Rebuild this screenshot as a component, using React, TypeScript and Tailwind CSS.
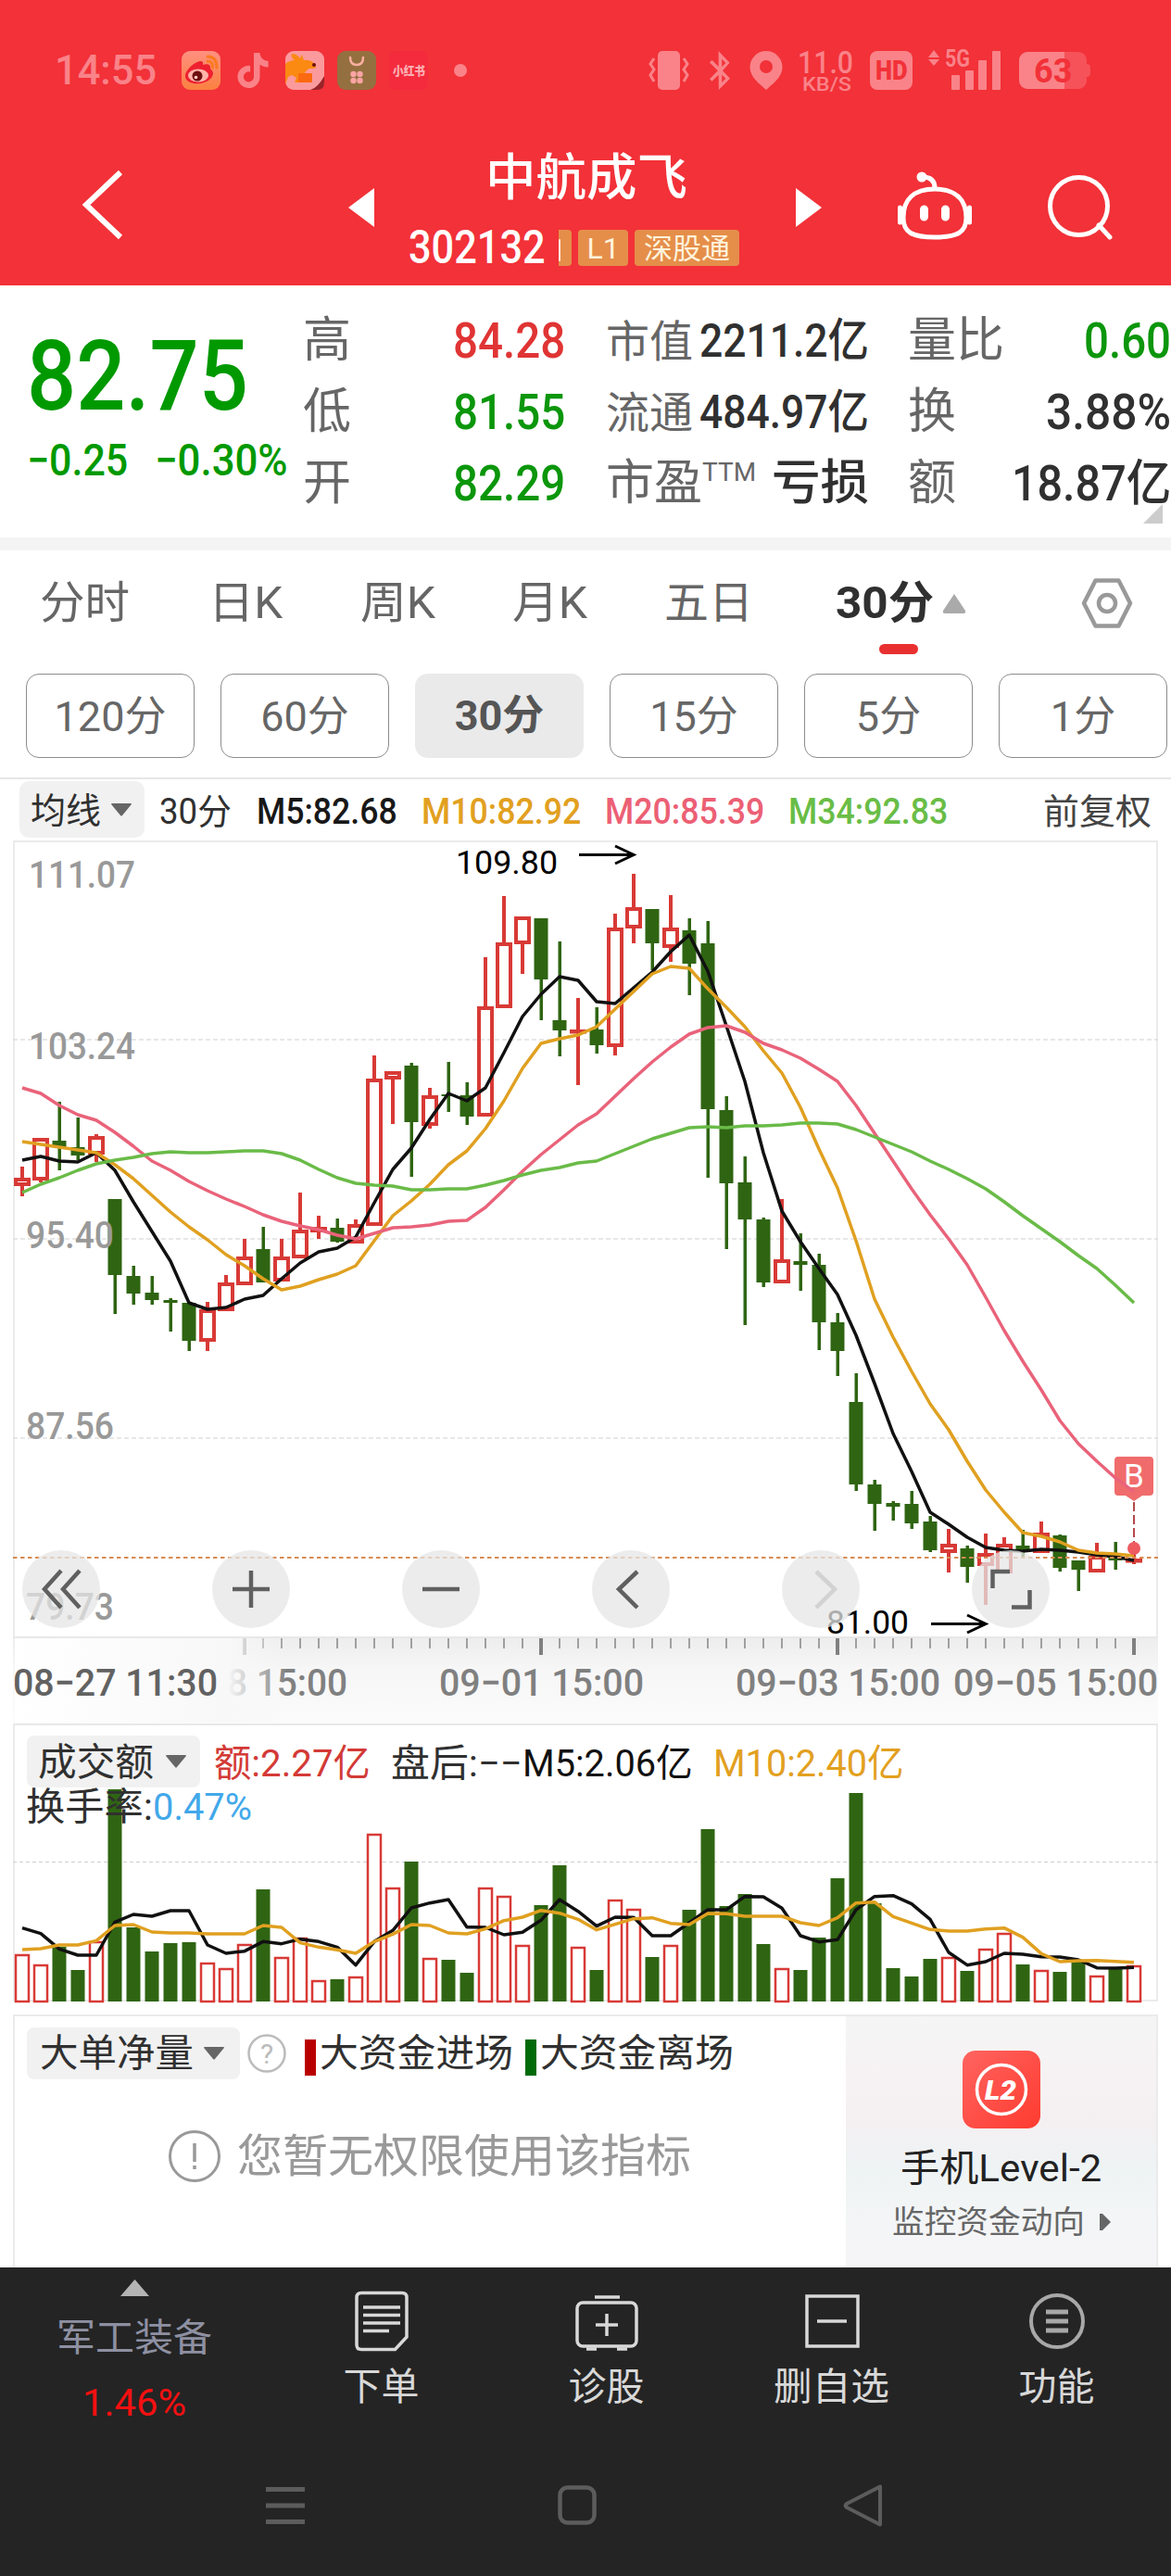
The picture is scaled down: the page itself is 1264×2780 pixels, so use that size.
import { useLayoutEffect, useRef, useState } from "react";
import type { ReactNode } from "react";
import { FaBluetoothB, FaTiktok } from "react-icons/fa";

const RED = "#d83a36";
const GREEN = "#2f6512";

// up/down flag of each 30 minute bar
const DIRS = "rrggrgggggrrrgrrrgrrrgrggrrrggrgrrgrggggg" + "rgggggggg" + "rgrrgrggrgr";

// [high, bodyTop, bodyBottom, low]
const CANDLES = [
  [1259, 1271, 1280, 1291], [1228, 1228, 1274, 1276], [1189, 1231, 1238, 1263], [1206, 1238, 1247, 1252],
  [1224, 1226, 1246, 1254], [1294, 1294, 1376, 1418], [1366, 1377, 1396, 1408], [1377, 1395, 1403, 1408],
  [1401, 1403, 1406, 1437], [1406, 1406, 1447, 1458], [1405, 1413, 1448, 1458], [1376, 1384, 1415, 1415],
  [1337, 1356, 1387, 1387], [1324, 1348, 1384, 1384], [1337, 1356, 1383, 1383], [1287, 1327, 1358, 1358],
  [1312, 1324, 1330, 1337], [1315, 1325, 1340, 1341], [1316, 1321, 1342, 1342], [1139, 1164, 1323, 1323],
  [1156, 1156, 1165, 1213], [1147, 1150, 1211, 1270], [1174, 1182, 1215, 1218], [1146, 1181, 1183, 1200],
  [1168, 1182, 1205, 1214], [1033, 1086, 1205, 1205], [967, 1017, 1088, 1088], [989, 989, 1019, 1051],
  [991, 991, 1057, 1101], [1016, 1101, 1112, 1140], [1077, 1111, 1115, 1171], [1087, 1111, 1128, 1137],
  [986, 1001, 1130, 1139], [943, 979, 1002, 1018], [981, 981, 1018, 1047], [966, 1001, 1023, 1038],
  [991, 1004, 1040, 1074], [994, 1018, 1197, 1271], [1183, 1198, 1277, 1348], [1248, 1276, 1316, 1430],
  [1314, 1316, 1384, 1389], [1294, 1359, 1385, 1385], [1331, 1361, 1365, 1393], [1353, 1365, 1427, 1457],
  [1417, 1427, 1458, 1485], [1482, 1513, 1602, 1609], [1597, 1602, 1623, 1652], [1620, 1622, 1626, 1641],
  [1609, 1623, 1644, 1650], [1636, 1642, 1673, 1675], [1650, 1666, 1676, 1697], [1668, 1671, 1691, 1708],
  [1655, 1676, 1690, 1732], [1659, 1666, 1698, 1698], [1651, 1668, 1675, 1680], [1642, 1654, 1676, 1676],
  [1656, 1657, 1692, 1696], [1684, 1684, 1694, 1717], [1665, 1679, 1697, 1697], [1664, 1680, 1684, 1694],
  [1672, 1682, 1686, 1688],
];

const M5 = [
  1252, 1248, 1253, 1254, 1244, 1263, 1297, 1329, 1361, 1406, 1413, 1411, 1402, 1398, 1380, 1363, 1351, 1347, 1335, 1298,
  1262, 1239, 1208, 1180, 1188, 1174, 1136, 1097, 1073, 1054, 1058, 1081, 1083, 1066, 1049, 1027, 1009, 1048, 1107, 1167,
  1244, 1307, 1340, 1369, 1397, 1441, 1493, 1547, 1588, 1632, 1645, 1659, 1670, 1673, 1674, 1672, 1673, 1675, 1678, 1680, 1684,
];
const M10 = [
  1232, 1235, 1238, 1241, 1244, 1257, 1272, 1290, 1308, 1324, 1338, 1354, 1366, 1380, 1392, 1388, 1381, 1375, 1366, 1339,
  1312, 1296, 1278, 1257, 1242, 1218, 1188, 1153, 1126, 1121, 1117, 1108, 1089, 1070, 1051, 1043, 1045, 1067, 1087, 1108,
  1134, 1158, 1195, 1240, 1282, 1339, 1402, 1443, 1480, 1515, 1543, 1577, 1608, 1632, 1654, 1658, 1664, 1673, 1676, 1677, 1679,
];
const M20 = [
  1174, 1180, 1193, 1203, 1209, 1222, 1237, 1253, 1263, 1275, 1285, 1294, 1302, 1311, 1318, 1323, 1327, 1333, 1337, 1331,
  1325, 1324, 1322, 1318, 1317, 1303, 1284, 1264, 1246, 1230, 1214, 1202, 1183, 1164, 1146, 1130, 1116, 1109, 1107, 1114,
  1126, 1133, 1142, 1154, 1167, 1193, 1223, 1253, 1283, 1311, 1337, 1365, 1400, 1436, 1469, 1500, 1533, 1558, 1577, 1595, 1610,
];
const M34 = [
  1287, 1278, 1271, 1263, 1256, 1252, 1249, 1245, 1243, 1244, 1244, 1243, 1242, 1242, 1245, 1252, 1262, 1271, 1277, 1279,
  1280, 1284, 1284, 1283, 1283, 1279, 1274, 1268, 1263, 1260, 1255, 1253, 1245, 1237, 1229, 1223, 1217, 1216, 1217, 1215,
  1215, 1214, 1212, 1212, 1213, 1219, 1227, 1235, 1243, 1253, 1262, 1272, 1283, 1297, 1312, 1326, 1340, 1355, 1369, 1387, 1406,
];

const VOL = [
  2109, 2120, 2101, 2126, 2095, 1931, 2080, 2106, 2097, 2096, 2118, 2124, 2098, 2039, 2112, 2091, 2137, 2136, 2133, 1979,
  2037, 2009, 2113, 2115, 2129, 2037, 2046, 2099, 2056, 2013, 2101, 2126, 2050, 2060, 2112, 2099, 2061, 1974, 2057, 2044,
  2098, 2124, 2126, 2091, 2027, 1935, 2054, 2124, 2133, 2114, 2112, 2127, 2103, 2086, 2120, 2126, 2128, 2116, 2132, 2124, 2121,
];
// volume averages, in thirds of a pixel from the panel top
const V5 = [
  662, 680, 730, 750, 750, 643, 618, 624, 606, 606, 717, 744, 737, 706, 713, 698, 706, 724, 782, 706,
  670, 597, 581, 570, 659, 660, 684, 676, 637, 570, 608, 656, 627, 628, 687, 687, 645, 603, 603, 560,
  561, 598, 687, 707, 700, 603, 560, 557, 584, 634, 741, 782, 771, 744, 747, 755, 756, 765, 791, 792, 790,
];
const V10 = [
  732, 729, 717, 717, 703, 654, 651, 675, 678, 678, 681, 681, 681, 654, 660, 710, 724, 733, 744, 706,
  682, 651, 654, 678, 681, 665, 638, 627, 605, 614, 634, 668, 650, 632, 629, 647, 651, 615, 616, 624,
  624, 624, 645, 654, 629, 581, 578, 625, 646, 667, 672, 672, 665, 662, 692, 745, 771, 768, 767, 770, 773,
];

const barX = (i: number) => 24 + i * 20;
const toPoints = (ys: number[]) => ys.map((y, i) => `${barX(i)},${y}`).join(" ");
const volY = (v: number) => 1860 + v / 3;

// Squeezes its text to the width of the box
function Fit({ className, children }: { className: string; children: ReactNode }) {
  const box = useRef<HTMLSpanElement>(null);
  const text = useRef<HTMLSpanElement>(null);
  const [scale, setScale] = useState(1);

  useLayoutEffect(() => {
    if (!box.current || !text.current) return;
    setScale(box.current.offsetWidth / text.current.offsetWidth);
  }, [children]);

  return (
    <span ref={box} className={`inline-block shrink-0 whitespace-nowrap ${className}`}>
      <span ref={text} className="inline-block origin-left" style={{ transform: `scaleX(${scale})` }}>
        {children}
      </span>
    </span>
  );
}

function Down() {
  return (
    <svg width="22" height="14" viewBox="0 0 22 14" className="shrink-0">
      <path d="M1 0h20q1.500 0 .5 1.500L12 13q-1 1-2 0L.5 1.500Q-.5 0 1 0z" fill="#666" />
    </svg>
  );
}

function StatusBar() {
  return (
    <div className="flex h-[44px] items-center text-[#f98389]">
      <Fit className="ml-[59px] w-[110px] text-[45px] leading-[44px] font-medium">14:55</Fit>
      <svg className="ml-[27px]" width="42" height="42" viewBox="0 0 42 42">
        <defs>
          <linearGradient id="wb" x1="0" y1="0" x2="0" y2="1">
            <stop offset="0" stopColor="#ff9080" />
            <stop offset="1" stopColor="#fb8140" />
          </linearGradient>
        </defs>
        <rect width="42" height="42" rx="9" fill="url(#wb)" />
        <path d="M17 12c-7 3-14 11-13 16 1 6 9 8 16 7 8-1 14-6 14-11 0-2-2-4-3-5 1-4-3-6-8-4 1-4-2-5-6-3z" fill="#ee2030" />
        <ellipse cx="18" cy="26.500" rx="11" ry="7" fill="#ffb4aa" />
        <circle cx="17" cy="27" r="5.500" fill="#6d1010" />
        <circle cx="15.500" cy="28.500" r="1.800" fill="#ffd0c8" />
        <path d="M28 6q10 0 10 12M28 11q6 0 5.500 7" fill="none" stroke="#fb7a20" strokeWidth="3" strokeLinecap="round" />
      </svg>
      <FaTiktok className="ml-[17px] h-[38px] w-[36px]" />
      <svg className="ml-[17px]" width="42" height="42" viewBox="0 0 42 42">
        <rect width="42" height="42" rx="9" fill="#fb9a9d" />
        <path d="M0 14c3-3 7-4 10-4-3-2-4-5-3-7 4 0 7 2 9 5l2-4 2 6c6-1 13 3 13 7 0 2-3 2-7 2-4 2-5 5-7 7l-4 3v5h-5l2-5-5-3-4 2-3 8-3 1z" fill="#fb8a12" />
        <circle cx="31" cy="15" r="2" fill="#6d1010" />
        <rect x="14" y="24" width="15" height="10" rx="1" fill="#fb6a10" />
        <path d="M42 27v7q0 8-8 8h-7q8-2 15-15z" fill="#982428" />
      </svg>
      <svg className="ml-[14px]" width="42" height="42" viewBox="0 0 42 42">
        <rect width="42" height="42" rx="9" fill="#947040" />
        <path d="M14 7q0 8 7 8t7-8" fill="none" stroke="#fbb0a0" strokeWidth="2.500" strokeLinecap="round" />
        <g fill="#fba4a4">
          <circle cx="17.500" cy="25" r="3.200" />
          <circle cx="24.500" cy="25" r="3.200" />
          <circle cx="17.500" cy="32" r="3.200" />
          <circle cx="24.500" cy="32" r="3.200" />
        </g>
      </svg>
      <div className="ml-[14px] flex h-[42px] w-[42px] items-center justify-center rounded-lg bg-[#f42b3d]">
        <Fit className="w-[35px] text-[13px] leading-none font-black text-[#fbb0b4]">小红书</Fit>
      </div>
      <div className="ml-[28px] h-3.5 w-3.5 rounded-full bg-[#f98389]" />

      <svg className="ml-[195px]" width="46" height="42" viewBox="0 0 46 42" fill="#f98389">
        <rect x="11" width="24" height="42" rx="5" />
        <path d="M7 8L3 14l4 6-4 6 4 7M39 8l4 6-4 6 4 6-4 7" fill="none" stroke="#f98389" strokeWidth="3" />
      </svg>
      <FaBluetoothB className="ml-[16px] h-[42px] w-[32px]" />
      <svg className="ml-[16px]" width="36" height="42" viewBox="0 0 36 42">
        <path d="M18 0A17.500 17.500 0 0 0 .5 17.500C.5 29 12 36 18 42c6-6 17.500-13 17.500-24.500A17.500 17.500 0 0 0 18 0zm0 10a7 7 0 1 1 0 14 7 7 0 0 1 0-14z" fill="#f98389" fillRule="evenodd" />
      </svg>
      <svg className="ml-[16px]" width="60" height="56" viewBox="860 48 60 56" fill="#f98389" fontWeight="500">
        <text x="860" y="79" fontSize="33" textLength="60" lengthAdjust="spacingAndGlyphs">11.0</text>
        <text x="865" y="98" fontSize="21" textLength="53" lengthAdjust="spacingAndGlyphs">KB/S</text>
      </svg>
      <div className="ml-[18px] flex h-[42px] w-[46px] items-center justify-center rounded-lg bg-[#f98389]">
        <Fit className="w-[35px] text-[30px] leading-none font-black text-[#f23138]">HD</Fit>
      </div>
      <svg className="ml-[17px]" width="79" height="60" viewBox="1001 45 79 60" fill="#f98389">
        <path d="M1001 61l6-8 6 8zM1001 63h12l-6 7z" />
        <text x="1019" y="71" fontSize="25" fontWeight="700" textLength="27" lengthAdjust="spacingAndGlyphs">5G</text>
        <rect x="1026" y="80" width="9" height="16" rx="1" />
        <rect x="1041" y="75" width="9" height="21" rx="1" />
        <rect x="1055" y="64" width="9" height="32" rx="1" />
        <rect x="1070" y="54" width="9" height="42" rx="1" />
      </svg>
      <div className="ml-[19px] flex items-center">
        <div className="flex h-[40px] w-[73px] items-center justify-center rounded-[9px] bg-[linear-gradient(90deg,#f98389_67%,#f6525a_67%)]">
          <Fit className="w-[41px] text-[37px] leading-none font-bold text-[#f23138]">63</Fit>
        </div>
        <div className="h-[14px] w-1 rounded-r bg-[#f6525a]" />
      </div>
    </div>
  );
}

function Header() {
  return (
    <header className="h-[308px] bg-[#f23138] pt-[54px]">
      <StatusBar />
      <div className="flex h-[210px] items-start text-white">
        <svg className="mt-[83px] ml-[87px] shrink-0" width="48" height="80" viewBox="87 181 48 80">
          <path d="M130 186L93 221l37 35" fill="none" stroke="#fff" strokeWidth="6" />
        </svg>
        <svg className="mt-[105px] ml-[241px] shrink-0" width="28" height="42" viewBox="0 0 28 42">
          <path d="M0 21L28 0v42z" fill="#fff" />
        </svg>
        <div className="ml-[37px] w-[357px] pt-[65px]">
          <Fit className="ml-[83px] w-[218px] text-[54px] leading-[60px] font-medium">中航成飞</Fit>
          <div className="mt-[25px] flex h-[39px] items-center">
            <Fit className="w-[148px] text-[50px] leading-[39px] font-medium">302132</Fit>
            <div className="ml-[14px] h-[39px] w-[14px] rounded-r bg-[#e58e4a]">
              <div className="h-6 w-[2px] translate-y-2.5 rounded bg-[#fff3dc]" />
            </div>
            <div className="ml-[7px] h-[39px] w-[54px] rounded bg-[#e58e4a] text-center text-[32px] leading-[40px] text-[#fff3dc]">L1</div>
            <div className="ml-[7px] h-[39px] w-[113px] rounded bg-[#e58e4a] text-center text-[31px] leading-[41px] text-[#fff3dc]">深股通</div>
          </div>
        </div>
        <svg className="mt-[105px] ml-[61px] shrink-0" width="28" height="42" viewBox="0 0 28 42">
          <path d="M28 21L0 0v42z" fill="#fff" />
        </svg>
        <svg className="mt-[85px] ml-[79px] shrink-0" width="87" height="78" viewBox="966 183 87 78" fill="none" stroke="#fff" strokeWidth="5">
          <path d="M1009 204c23 0 34 12 34 31 0 16-10 21-34 21s-34-5-34-21c0-19 11-31 34-31z" />
          <path d="M1009 203c0-8-4-12-13-12" />
          <circle cx="995" cy="191" r="3" fill="#fff" />
          <path d="M971.500 224v16M1046.500 224v16" strokeLinecap="round" />
          <path d="M997.500 226v8M1020.500 226v8" strokeWidth="9" strokeLinecap="round" />
        </svg>
        <svg className="mt-[88px] ml-[76px] shrink-0" width="76" height="76" viewBox="1129 186 76 76" fill="none" stroke="#fff" strokeWidth="5">
          <circle cx="1164.500" cy="222.500" r="31" />
          <path d="M1186 243l12 13" strokeLinecap="round" />
        </svg>
      </div>
    </header>
  );
}

function Cell({ children }: { children: ReactNode }) {
  return <div className="flex h-[77px] items-center justify-between pt-[3px]">{children}</div>;
}

function Quote() {
  return (
    <section className="relative flex h-[272px] pt-[20px] font-medium text-[#303030]">
      <div className="ml-[29px] w-[298px] text-[#009900]">
        <Fit className="mt-[22px] w-[239px] text-[105px] leading-[114px]">82.75</Fit>
        <div className="mt-[8px] flex text-[48px] leading-[50px]">
          <Fit className="w-[109px]">−0.25</Fit>
          <Fit className="ml-[29px] w-[144px]">−0.30%</Fit>
        </div>
      </div>
      <div className="w-[283px] text-[53px] leading-none text-[#0b960b]">
        <Cell><span className="text-[52px] font-normal text-[#666]">高</span><Fit className="w-[121px] text-[#e03434]">84.28</Fit></Cell>
        <Cell><span className="text-[52px] font-normal text-[#666]">低</span><Fit className="w-[121px]">81.55</Fit></Cell>
        <Cell><span className="text-[52px] font-normal text-[#666]">开</span><Fit className="w-[121px]">82.29</Fit></Cell>
      </div>
      <div className="ml-[44px] w-[284px] text-[50px] leading-none">
        <Cell><span className="text-[47px] font-normal text-[#666]">市值</span><Fit className="w-[183px]">2211.2亿</Fit></Cell>
        <Cell><span className="text-[47px] font-normal text-[#666]">流通</span><Fit className="w-[183px]">484.97亿</Fit></Cell>
        <Cell>
          <span className="flex text-[52px] font-normal text-[#666]">市盈<span className="text-[28px] leading-none">TTM</span></span>
          <Fit className="w-[105px] text-[52px]">亏损</Fit>
        </Cell>
      </div>
      <div className="ml-[42px] w-[284px] text-[53px] leading-none">
        <Cell><span className="text-[52px] font-normal text-[#666]">量比</span><Fit className="w-[94px] text-[#0b960b]">0.60</Fit></Cell>
        <Cell><span className="text-[52px] font-normal text-[#666]">换</span><Fit className="w-[135px]">3.88%</Fit></Cell>
        <Cell><span className="text-[52px] font-normal text-[#666]">额</span><Fit className="w-[172px]">18.87亿</Fit></Cell>
      </div>
      <svg className="absolute right-[9px] bottom-[15px]" width="21" height="21" viewBox="0 0 21 21">
        <path d="M21 0v21H0z" fill="#ccc" />
      </svg>
    </section>
  );
}

function Tabs() {
  return (
    <section className="h-[245px] pt-[27px] text-[#666]">
      <nav className="flex h-[60px] items-center text-[48px] leading-[64px]">
        <Fit className="ml-[43px] w-[97px]">分时</Fit>
        <Fit className="ml-[85px] w-[80px]">日K</Fit>
        <Fit className="ml-[84px] w-[81px]">周K</Fit>
        <Fit className="ml-[83px] w-[81px]">月K</Fit>
        <Fit className="ml-[83px] w-[96px]">五日</Fit>
        <div className="relative ml-[89px] flex items-center">
          <Fit className="w-[106px] font-bold text-[#303030]">30分</Fit>
          <svg className="ml-[9px]" width="26" height="21" viewBox="0 0 26 21">
            <path d="M13 0l12 18q1 3-2 3H3q-3 0-2-3z" fill="#aaa" />
          </svg>
          <span className="absolute top-[76px] left-[47px] h-[11px] w-[42px] rounded-full bg-[#e93030]" />
        </div>
        <svg className="ml-[123px] shrink-0" width="58" height="56" viewBox="0 0 58 56" fill="none" stroke="#999" strokeWidth="4.500">
          <path d="M16.500 3.500h25L54 28 41.500 52.500h-25L4 28z" strokeLinejoin="round" />
          <circle cx="29" cy="28" r="9" />
        </svg>
      </nav>
      <div className="mt-[46px] flex gap-[28px] pl-[28px] text-[45px]">
        {["120分", "60分", "30分", "15分", "5分", "1分"].map((label) => (
          <div
            key={label}
            className={`h-[91px] w-[182px] shrink-0 rounded-[14px] text-center leading-[92px] ${
              label === "30分" ? "bg-[#eaeaea] font-bold text-[#555]" : "border border-[#8c8c8c]"
            }`}
          >
            {label}
          </div>
        ))}
      </div>
    </section>
  );
}

function MaLegend() {
  return (
    <div className="flex h-[67px] items-start border-t-2 border-[#e6e6e6] text-[38px] leading-[61px]">
      <div className="mt-[2px] ml-[21px] flex h-[61px] w-[135px] items-center justify-between rounded-[10px] bg-[#f1f1f1] pr-[14px] pl-[12px] text-[#303030]">
        <span className="pt-[3px]">均线</span> <Down />
      </div>
      <div className="mt-[5px] ml-[16px] flex">
        <Fit className="w-[78px] text-[#303030]">30分</Fit>
        <Fit className="ml-[27px] w-[152px] font-medium text-[#181818]">M5:82.68</Fit>
        <Fit className="ml-[26px] w-[172px] font-medium text-[#e2a01f]">M10:82.92</Fit>
        <Fit className="ml-[26px] w-[172px] font-medium text-[#ec6074]">M20:85.39</Fit>
        <Fit className="ml-[26px] w-[172px] font-medium text-[#69bd46]">M34:92.83</Fit>
        <Fit className="ml-[103px] w-[117px] text-[#444]">前复权</Fit>
      </div>
    </div>
  );
}

const PRICE_LABELS = [
  { text: "111.07", x: 31, y: 958, w: 115 },
  { text: "103.24", x: 31, y: 1143, w: 115 },
  { text: "95.40", x: 28, y: 1347, w: 95 },
  { text: "87.56", x: 28, y: 1553, w: 95 },
  { text: "79.73", x: 28, y: 1748, w: 95 },
];

function KLine() {
  return (
    <svg className="block font-[Roboto,sans-serif]" width="1264" height="954" viewBox="0 906 1264 954">
      <defs>
        <linearGradient id="axisBg" x1="0" y1="0" x2="0" y2="1">
          <stop offset="0" stopColor="#ededed" />
          <stop offset=".4" stopColor="#f7f7f7" />
          <stop offset="1" stopColor="#fbfbfb" />
        </linearGradient>
        <linearGradient id="axisFade" x1="0" y1="0" x2="1" y2="0">
          <stop offset="0" stopColor="#fff" />
          <stop offset=".78" stopColor="#f8f8f8" />
          <stop offset="1" stopColor="#f8f8f8" stopOpacity="0" />
        </linearGradient>
      </defs>
      <path d="M15 1860V908H1249V1860" fill="none" stroke="#ebebeb" strokeWidth="2" />
      <path d="M14 1122H1250M14 1337H1250M14 1552H1250" stroke="#dfdfdf" strokeWidth="1.500" strokeDasharray="5 3" />

      {CANDLES.map(([high, top, bottom, low], i) => {
        const x = barX(i);
        return DIRS[i] === "r" ? (
          <g key={i} stroke={RED} strokeWidth="4" fill="none">
            <path d={`M${x} ${high}V${top + 1}M${x} ${bottom - 1}V${low}`} />
            <rect x={x - 7} y={top + 2} width="14" height={Math.max(bottom - top - 4, 0.5)} />
          </g>
        ) : (
          <g key={i} fill={GREEN}>
            <rect x={x - 1.5} y={high} width="3.500" height={low - high} />
            <rect x={x - 7.5} y={top} width="15" height={bottom - top} />
          </g>
        );
      })}

      <g fill="none" strokeWidth="3.500" strokeLinejoin="round">
        <polyline points={toPoints(M5)} stroke="#111" />
        <polyline points={toPoints(M10)} stroke="#e0a020" />
      </g>

      <path d="M14 1681H1250" stroke="#d88b52" strokeWidth="2" strokeDasharray="4.500 3.500" />

      <path d="M1207 1572h34q4 0 4 4v34q0 4-4 4h-8l-9 6-9-6h-8q-4 0-4-4v-34q0-4 4-4z" fill="#f06c6c" />
      <text x="1224" y="1605" fontSize="35" fill="#fff" textAnchor="middle">B</text>
      <path d="M1224 1621V1672" stroke="#b5484c" strokeWidth="2" strokeDasharray="10 4" />
      <circle cx="1224" cy="1671" r="7" fill="#ee5a60" />

      <g fill="none" strokeWidth="3.500" strokeLinejoin="round">
        <polyline points={toPoints(M20)} stroke="#e9637a" />
        <polyline points={toPoints(M34)} stroke="#6abb48" />
      </g>

      {PRICE_LABELS.map((l) => (
        <text key={l.text} x={l.x} y={l.y} fontSize="41" fontWeight="500" fill="#999" textLength={l.w} lengthAdjust="spacingAndGlyphs">
          {l.text}
        </text>
      ))}
      <text x="492" y="943" fontSize="35" textLength="110" lengthAdjust="spacingAndGlyphs">109.80</text>
      <path d="M625 922.500H683M664 913l20 9.500-20 9.500" fill="none" stroke="#000" strokeWidth="3" />
      <text x="892" y="1763" fontSize="35" textLength="89" lengthAdjust="spacingAndGlyphs">81.00</text>
      <path d="M1005 1752.500H1063M1044 1743l20 9.500-20 9.500" fill="none" stroke="#000" strokeWidth="3" />

      {/* time axis */}
      <rect x="14" y="1767" width="1236" height="93" fill="url(#axisBg)" />
      <path d="M14 1767H1250" stroke="#e8e8e8" strokeWidth="2" />
      {Array.from({ length: 50 }, (_, i) => {
        const major = (i + 11) % 16 === 12;
        return <rect key={i} x={barX(i + 11) - (major ? 2 : 1)} y="1768" width={major ? 4 : 2} height={major ? 18 : 11} fill={major ? "#808080" : "#a0a0a0"} />;
      })}
      <g fontSize="41" fontWeight="500" fill="#808080">
        <text x="245" y="1830" textLength="130" lengthAdjust="spacingAndGlyphs">8 15:00</text>
        <text x="474" y="1830" textLength="221" lengthAdjust="spacingAndGlyphs">09−01 15:00</text>
        <text x="794" y="1830" textLength="221" lengthAdjust="spacingAndGlyphs">09−03 15:00</text>
        <text x="1029" y="1830" textLength="221" lengthAdjust="spacingAndGlyphs">09−05 15:00</text>
        <rect x="16" y="1768" width="294" height="91" fill="url(#axisFade)" />
        <text x="14" y="1830" textLength="221" lengthAdjust="spacingAndGlyphs" fill="#626262">08−27 11:30</text>
      </g>
    </svg>
  );
}

const TOOLS = [
  { name: "fast-back", d: "M42 22L24 42l18 20M62 22L44 42l18 20" },
  { name: "zoom-in", d: "M42 22v40M22 42h40" },
  { name: "zoom-out", d: "M22 42h40" },
  { name: "back", d: "M49 23L29 42l20 20" },
  { name: "forward", d: "M37 23l20 19-20 20", off: true },
  { name: "fullscreen", d: "M22.500 41V23H41M62.500 43V61.500H43" },
];

function ChartTools() {
  return (
    <div className="absolute top-[767px] left-[24px] flex gap-[121px]">
      {TOOLS.map((t) => (
        <button key={t.name} className="h-[84px] w-[84px] rounded-full bg-[#e6e6e6]/75">
          <svg width="84" height="84" viewBox="0 0 84 84" fill="none" stroke={t.off ? "#d2d2d2" : "#606060"} strokeWidth="4.500">
            <path d={t.d} />
          </svg>
        </button>
      ))}
    </div>
  );
}

function Volume() {
  return (
    <section className="relative h-[314px]">
      <svg className="block" width="1264" height="314" viewBox="0 1860 1264 314">
        <path d="M15 1860V2159H1249V1860" fill="none" stroke="#ebebeb" strokeWidth="2" />
        <path d="M14 1861H1250" stroke="#e8e8e8" strokeWidth="2" />
        <path d="M14 2009.500H1250" stroke="#d8d8d8" strokeWidth="1.500" strokeDasharray="4 3" />
        {VOL.map((top, i) =>
          DIRS[i] === "r" ? (
            <rect key={i} x={barX(i) - 7} y={top + 1} width="14" height={2159 - top} fill="#fff" stroke={RED} strokeWidth="2.500" />
          ) : (
            <rect key={i} x={barX(i) - 7.5} y={top} width="15" height={2160 - top} fill={GREEN} />
          ),
        )}
        <g fill="none" strokeWidth="3.500" strokeLinejoin="round">
          <polyline points={toPoints(V5.map(volY))} stroke="#111" />
          <polyline points={toPoints(V10.map(volY))} stroke="#e0a020" />
        </g>
      </svg>
      <div className="absolute top-[13px] left-[29px] flex text-[41px] leading-[60px] text-[#303030]">
        <div className="flex h-[56px] w-[187px] items-center justify-between rounded-[8px] bg-[#f1f1f1] pr-[15px] pl-[12px]">
          <Fit className="w-[125px] pt-[2px]">成交额</Fit>
          <Down />
        </div>
        <Fit className="ml-[15px] w-[169px] text-[#d33a36]">额:2.27亿</Fit>
        <Fit className="ml-[22px] w-[142px]">盘后:−−</Fit>
        <Fit className="w-[184px] text-[#111]">M5:2.06亿</Fit>
        <Fit className="ml-[22px] w-[206px] text-[#e2a01f]">M10:2.40亿</Fit>
      </div>
      <div className="absolute top-[66px] left-[28px] flex text-[41px] leading-[48px] text-[#303030]">
        <Fit className="w-[137px]">换手率:</Fit>
        <Fit className="w-[107px] text-[#42a8ea]">0.47%</Fit>
      </div>
    </section>
  );
}

function NetFlow() {
  return (
    <section className="mx-[14px] flex h-[273px] border-x-2 border-t-2 border-[#ebebeb] text-[41px] text-[#303030]">
      <div className="w-[897px]">
        <div className="mt-[12px] ml-[13px] flex h-[56px] items-center leading-[60px]">
          <div className="flex h-[56px] w-[230px] items-center justify-between rounded-[8px] bg-[#f1f1f1] pr-[17px] pl-[14px]">
            <Fit className="w-[166px]">大单净量</Fit>
            <Down />
          </div>
          <svg className="ml-[7px]" width="44" height="44" viewBox="0 0 44 44">
            <circle cx="22" cy="22" r="19.500" fill="none" stroke="#bbb" strokeWidth="2.500" />
            <text x="22" y="33" fontSize="30" fill="#bbb" textAnchor="middle">?</text>
          </svg>
          <span className="mt-2 ml-[19px] h-[39px] w-[12px] bg-[#b90000]" />
          <Fit className="ml-[4px] w-[209px]">大资金进场</Fit>
          <span className="mt-2 ml-[13px] h-[39px] w-[12px] bg-[#006a08]" />
          <Fit className="ml-[4px] w-[209px]">大资金离场</Fit>
        </div>
        <div className="mt-[51px] ml-[165px] flex items-center text-[49px] leading-[60px] text-[#999]">
          <svg width="58" height="58" viewBox="0 0 58 58" fill="none" stroke="#999" strokeWidth="3">
            <circle cx="29" cy="29" r="26.500" />
            <path d="M29 15v20M29 39v4" strokeWidth="3.500" />
          </svg>
          <span className="ml-[17px] pt-[3px]">您暂无权限使用该指标</span>
        </div>
      </div>
      <div className="flex flex-1 flex-col items-center bg-[linear-gradient(180deg,#f5f5f5_0%,#f6f1f3_30%,#f4f0f2_42%,#eef3f4_60%,#f2f5f5_75%,#f5f5f8_90%)]">
        <svg className="mt-[37px]" width="84" height="84" viewBox="0 0 84 84">
          <defs>
            <linearGradient id="l2" x1="0" y1="0" x2="1" y2="1">
              <stop offset="0" stopColor="#ff6460" />
              <stop offset="1" stopColor="#ff3b30" />
            </linearGradient>
          </defs>
          <rect width="84" height="84" rx="14" fill="url(#l2)" />
          <circle cx="42" cy="42" r="26.500" fill="none" stroke="#fff" strokeWidth="3.500" />
          <text x="24" y="53" fontSize="30" fontWeight="900" fontStyle="italic" fill="#fff" textLength="34" lengthAdjust="spacingAndGlyphs">L2</text>
        </svg>
        <Fit className="mt-[18px] w-[217px] leading-[50px] text-[#222]">手机Level-2</Fit>
        <div className="mt-[12px] flex items-center text-[34px] leading-[42px] text-[#666]">
          <Fit className="w-[208px]">监控资金动向</Fit>
          <svg className="ml-[16px]" width="12" height="18" viewBox="0 0 12 18">
            <path d="M0 0h3l9 9-9 9H0z" fill="#666" />
          </svg>
        </div>
      </div>
    </section>
  );
}

function BottomBar() {
  return (
    <footer className="h-[333px] bg-[#242424] text-[41px] text-[#d8d8d8]">
      <div className="flex h-[225px] items-start">
        <div className="flex w-[290px] flex-col items-center pt-[13px]">
          <svg width="31" height="18" viewBox="0 0 31 18">
            <path d="M15.500 0L31 18H0z" fill="#b4b4b4" />
          </svg>
          <Fit className="mt-[20px] w-[168px] leading-[50px] text-[#8e90a2]">军工装备</Fit>
          <Fit className="mt-[20px] w-[112px] leading-[50px] text-[#f51010]">1.46%</Fit>
        </div>
        <div className="flex w-[243px] flex-col items-center pt-[24px]">
          <svg width="60" height="68" viewBox="0 0 60 68" fill="none" stroke="#d8d8d8" strokeWidth="3.500">
            <path d="M8 3.500h44q5 0 5 5V51L44.500 64.500H8q-5 0-5-5v-51q0-5 5-5z" />
            <path d="M10 19h40M10 27.500h40M10 36h40M10 44.500h28" />
          </svg>
          <span className="mt-[12px] leading-[50px]">下单</span>
        </div>
        <div className="flex w-[243px] flex-col items-center pt-[24px]">
          <svg width="70" height="68" viewBox="0 0 70 68" fill="none" stroke="#d8d8d8" strokeWidth="3.500">
            <rect x="3" y="14" width="64" height="47" rx="6" />
            <path d="M22 8h27M35 26v24M23 38h24" />
            <path d="M13 64h11M46 64h11" />
          </svg>
          <span className="mt-[12px] leading-[50px]">诊股</span>
        </div>
        <div className="flex w-[243px] flex-col items-center pt-[24px]">
          <svg width="60" height="68" viewBox="0 0 60 68" fill="none" stroke="#d8d8d8" strokeWidth="3.500">
            <rect x="3" y="7" width="55" height="54" />
            <path d="M14 34h32" />
          </svg>
          <Fit className="mt-[12px] w-[125px] leading-[50px]">删自选</Fit>
        </div>
        <div className="flex w-[243px] flex-col items-center pt-[24px]">
          <svg width="62" height="68" viewBox="0 0 62 68" fill="none" stroke="#a8a8a8" strokeWidth="4">
            <circle cx="31" cy="34" r="28" />
            <path d="M19 24h24M19 34h24M19 44h24" strokeWidth="5" />
          </svg>
          <span className="mt-[12px] leading-[50px]">功能</span>
        </div>
      </div>
      <div className="flex text-[#5c5c5c]">
        <svg className="ml-[287px]" width="42" height="64" viewBox="0 0 42 64" fill="none" stroke="currentColor" strokeWidth="5">
          <path d="M0 14.500h42M0 32h42M0 49.500h42" />
        </svg>
        <svg className="ml-[273px]" width="42" height="64" viewBox="0 0 42 64" fill="none" stroke="currentColor" strokeWidth="4.500">
          <rect x="2.500" y="12.500" width="37" height="38" rx="8" />
        </svg>
        <svg className="ml-[266px]" width="44" height="64" viewBox="0 0 44 64" fill="none" stroke="currentColor" strokeWidth="4">
          <path d="M40 11.500v41L4 34q-3-2 0-4z" strokeLinejoin="round" />
        </svg>
      </div>
    </footer>
  );
}

export default function App() {
  return (
    <div className="h-[2780px] w-[1264px] overflow-hidden bg-white font-[Roboto,'Noto_Sans_CJK_SC',sans-serif]">
      <Header />
      <Quote />
      <div className="h-[14px] bg-[#f4f4f4]" />
      <Tabs />
      <MaLegend />
      <div className="relative">
        <KLine />
        <ChartTools />
      </div>
      <Volume />
      <NetFlow />
      <BottomBar />
    </div>
  );
}
